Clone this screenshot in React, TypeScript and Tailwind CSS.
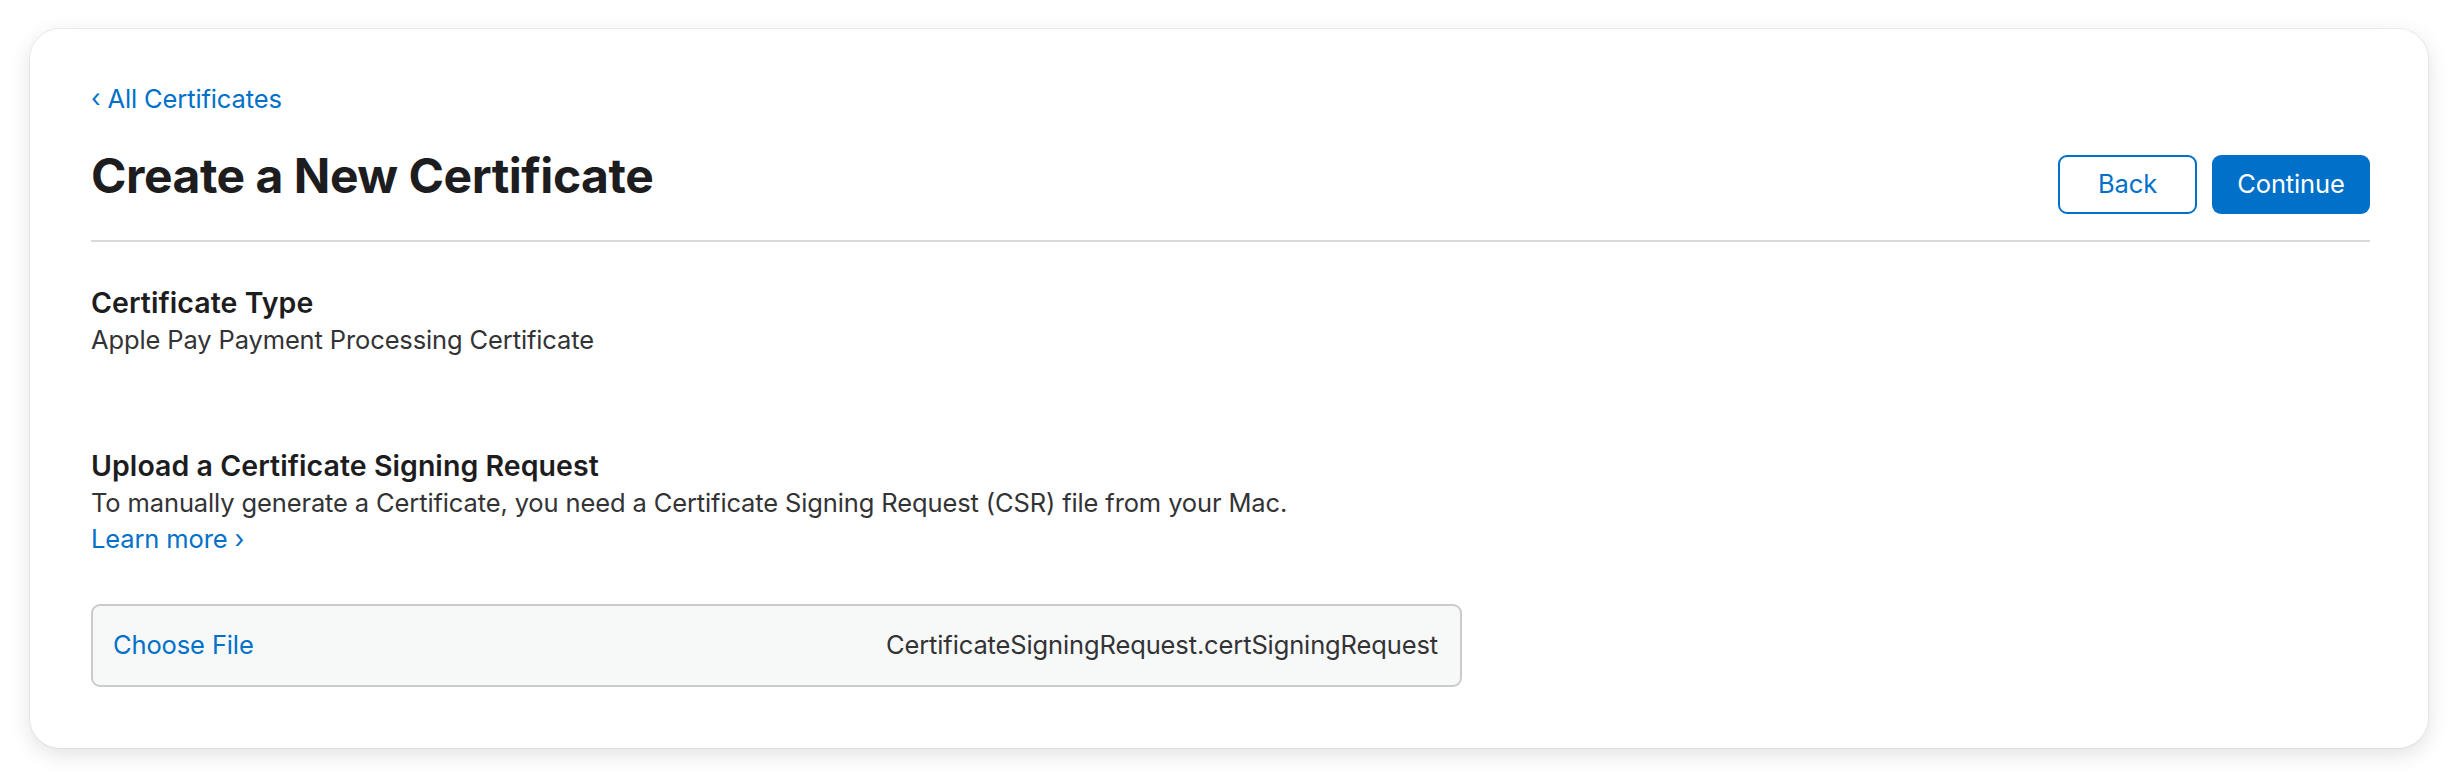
import type { ReactNode } from 'react';

const font = { fontFamily: 'Inter, "Noto Sans", sans-serif' };

const SectionHeading = ({ children }: { children: ReactNode }) => (
  <h2 className="text-[28.5px] leading-[34px] font-semibold text-[#1d1d1f] tracking-[0.002em]">{children}</h2>
);

const BodyText = ({ children }: { children: ReactNode }) => (
  <p className="text-[25.5px] leading-[36px] text-[#333336] tracking-[-0.005em]">{children}</p>
);

export default function App() {
  return (
    <div className="min-h-[778px] bg-white pt-[29px] px-[30px]" style={font}>
      <div className="rounded-[30px] bg-white pl-[61px] pr-[58px] pt-[54px] pb-[61px] shadow-[0_0_0_1px_rgba(0,0,0,0.05),0_6px_22px_rgba(0,0,0,0.12)]">
        <a href="#" className="flex items-center gap-[7px] text-[25.5px] leading-[31px] text-[#0070c9] tracking-[-0.005em]">
          <span className="text-[25px]">‹</span>
          <span>All Certificates</span>
        </a>

        <div className="mt-[35px] flex items-start justify-between">
          <h1 className="text-[48px] leading-[54px] font-bold text-[#1d1d1f] tracking-[-0.01em]">
            Create a New Certificate
          </h1>
          <div className="mt-[5.5px] flex gap-[15px]">
            <button className="h-[59px] w-[139px] rounded-[9px] border-2 border-[#0070c9] bg-white text-[25.5px] text-[#0070c9] tracking-[-0.005em]">
              Back
            </button>
            <button className="h-[59px] w-[158px] rounded-[9px] bg-[#0070c9] text-[25.5px] text-white tracking-[-0.005em]">
              Continue
            </button>
          </div>
        </div>

        <div className="mt-[26px] h-[2px] bg-[#d9d9dc]" />

        <div className="mt-[44px]">
          <SectionHeading>Certificate Type</SectionHeading>
          <div className="mt-[2px]">
            <BodyText>Apple Pay Payment Processing Certificate</BodyText>
          </div>
        </div>

        <div className="mt-[91px]">
          <SectionHeading>Upload a Certificate Signing Request</SectionHeading>
          <div className="mt-[2px]">
            <BodyText>
              To manually generate a Certificate, you need a Certificate Signing Request (CSR) file from your Mac.
            </BodyText>
            <a href="#" className="block text-[25.5px] leading-[36px] text-[#0070c9] tracking-[-0.005em]">
              Learn more ›
            </a>
          </div>
        </div>

        <div className="mt-[47px] flex h-[83px] w-[1371px] items-center justify-between rounded-[9px] border-2 border-[#cbcbcd] bg-[#f7f8f8] pl-[20px] pr-[22px]">
          <span className="text-[25.5px] text-[#0070c9] tracking-[-0.005em]">Choose File</span>
          <span className="text-[25.5px] text-[#333336] tracking-[-0.005em]">CertificateSigningRequest.certSigningRequest</span>
        </div>
      </div>
    </div>
  );
}
